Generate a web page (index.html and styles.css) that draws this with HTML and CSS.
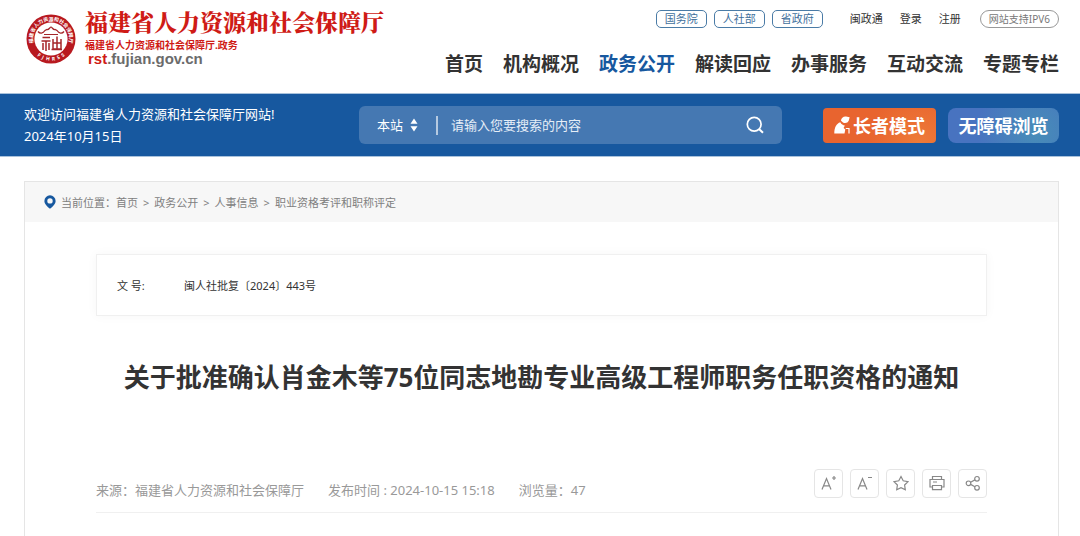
FILE: index.html
```html
<!DOCTYPE html>
<html lang="zh-CN">
<head>
    <meta charset="UTF-8">
    <meta name="viewport" content="width=device-width, initial-scale=1.0">
    <title>福建省人力资源和社会保障厅</title>
    <link rel="stylesheet" href="styles.css">
</head>
<body>
    <header class="header">
        <a class="logo" href="#">
            <svg class="seal" viewBox="0 0 50 50" aria-hidden="true">
                <defs>
                    <path id="arcTop" d="M7.3 29 A18.2 18.2 0 1 1 42.7 29"/>
                    <path id="arcBottom" d="M3.5 30 A22.2 22.2 0 0 0 46.5 30"/>
                </defs>
                <circle cx="25" cy="25" r="24.5" fill="#b8191f"/>
                <circle cx="25" cy="25" r="16.6" fill="#fff"/>
                <text class="seal-name"><textPath href="#arcTop" startOffset="50%" text-anchor="middle">福建省人力资源和社会保障厅</textPath></text>
                <text class="seal-code"><textPath href="#arcBottom" startOffset="50%" text-anchor="middle">F&#160; J&#160; H&#160; R&#160; S&#160; S</textPath></text>
                <g fill="none" stroke="#a5262a" stroke-width="1.5">
                    <path d="M12 17.5 C14 20 17 19.5 19 16.5 L21 15.5 C23 16 23.500 13.500 25 13 C26.500 13.500 27 16 29 15.500 L31 16.500 C33 19.500 36 20 38 17.500" stroke-width="1.300"/>
                    <path d="M18 20.500 H32" stroke-width="1"/>
                    <path d="M16.500 23.500 H24 M15.500 27 H24.500 M20 27 V37 M17 29 V36 M23 29 V36"/>
                    <path d="M27 25 V35 H35 V25 M27 29 H35 M31 22.500 V35 M25.500 35.500 H36"/>
                </g>
            </svg>
            <span class="logo-text">
                <span class="logo-name">福建省人力资源和社会保障厅</span>
                <span class="logo-sub">福建省人力资源和社会保障厅.政务</span>
                <span class="logo-url"><b>rst</b>.fujian.gov.cn</span>
            </span>
        </a>
        <div class="header-right">
            <div class="top-links">
                <a class="tag" href="#">国务院</a>
                <a class="tag" href="#">人社部</a>
                <a class="tag" href="#">省政府</a>
                <div class="user-links">
                    <a href="#">闽政通</a>
                    <a href="#">登录</a>
                    <a href="#">注册</a>
                </div>
                <a class="ipv6" href="#">网站支持IPV6</a>
            </div>
            <nav class="nav">
                <a href="#">首页</a>
                <a href="#">机构概况</a>
                <a href="#" class="active">政务公开</a>
                <a href="#">解读回应</a>
                <a href="#">办事服务</a>
                <a href="#">互动交流</a>
                <a href="#">专题专栏</a>
            </nav>
        </div>
    </header>

    <div class="banner">
        <div class="welcome">
            <p>欢迎访问福建省人力资源和社会保障厅网站!</p>
            <p>2024年10月15日</p>
        </div>
        <form class="search">
            <select aria-label="搜索范围">
                <option>本站</option>
            </select>
            <svg class="sort" viewBox="0 0 8 14" aria-hidden="true"><path d="M4 0.500 L7.500 5.800 H0.500 Z M4 13.500 L7.500 8.200 H0.500 Z" fill="#fff"/></svg>
            <span class="divider"></span>
            <input type="text" placeholder="请输入您要搜索的内容" aria-label="搜索内容">
            <button type="button" class="search-btn" aria-label="搜索">
                <svg viewBox="0 0 18 18"><circle cx="8.200" cy="8.200" r="6.900" fill="none" stroke="#fff" stroke-width="1.700"/><path d="M13 13 L17 16.800" stroke="#fff" stroke-width="2"/></svg>
            </button>
        </form>
        <div class="modes">
            <button type="button" class="mode elder">
                <svg viewBox="0 0 16 18" aria-hidden="true">
                    <path d="M7 4.800 C7 2 9.500 0.300 12 0.600 L15.600 1.200 L14.800 4.500 C14 7 11 7.600 9 6.500 Z" fill="#fff"/>
                    <path d="M0.300 17.500 C0.300 11.500 2.500 7.500 6.300 6.300 C7.500 8.500 9 9.300 10.800 9.400 L9.600 12 L11.300 13.500 L10.500 17.500 Z" fill="#fff"/>
                    <path d="M11.800 12.500 H15 V17.500" fill="none" stroke="#fff" stroke-width="1.200"/>
                </svg>
                <span>长者模式</span>
            </button>
            <button type="button" class="mode access">无障碍浏览</button>
        </div>
    </div>

    <main class="panel">
        <div class="crumbs">
            <svg viewBox="0 0 12 14" aria-hidden="true"><path fill-rule="evenodd" d="M6 0.300 A5.600 5.600 0 0 1 11.600 5.900 C11.600 9 8.500 11.500 6 13.800 C3.500 11.500 0.400 9 0.400 5.900 A5.600 5.600 0 0 1 6 0.300 Z M6 3.200 A2.700 2.700 0 1 0 6 8.600 A2.700 2.700 0 1 0 6 3.200 Z" fill="#17589f"/></svg>
            <span>当前位置：</span>
            <a href="#">首页</a><i>&gt;</i>
            <a href="#">政务公开</a><i>&gt;</i>
            <a href="#">人事信息</a><i>&gt;</i>
            <a href="#">职业资格考评和职称评定</a>
        </div>
        <article class="article">
            <dl class="doc-info">
                <dt>文 号:</dt>
                <dd>闽人社批复〔2024〕443号</dd>
            </dl>
            <h1>关于批准确认肖金木等75位同志地勘专业高级工程师职务任职资格的通知</h1>
            <div class="meta">
                <span>来源：福建省人力资源和社会保障厅</span>
                <span>发布时间 : 2024-10-15 15:18</span>
                <span>浏览量：47</span>
                <div class="tools">
                    <button type="button" aria-label="放大字体">
                        <svg viewBox="0 0 16 16"><path d="M1 14.500 L5.500 3.500 L10 14.500 M2.700 10.800 H8.300 M13 1 V5 M11 3 H15"/></svg>
                    </button>
                    <button type="button" aria-label="缩小字体">
                        <svg viewBox="0 0 16 16"><path d="M1 14.500 L5.500 3.500 L10 14.500 M2.700 10.800 H8.300 M11 2.500 H15"/></svg>
                    </button>
                    <button type="button" aria-label="收藏">
                        <svg viewBox="0 0 16 16"><path d="M8 1.500 L10.200 5.800 L15 6.600 L11.600 10 L12.300 14.700 L8 12.600 L3.700 14.700 L4.400 10 L1 6.600 L5.800 5.800 Z"/></svg>
                    </button>
                    <button type="button" aria-label="打印">
                        <svg viewBox="0 0 16 16"><path d="M3.500 4 V1.500 H12.500 V4 M3.500 12 H1 V4.500 H15 V12 H12.500 M3.500 10.500 H12.500 V14.700 H3.500 Z M4 7 H8"/></svg>
                    </button>
                    <button type="button" aria-label="分享">
                        <svg viewBox="0 0 16 16"><circle cx="3.500" cy="8.300" r="2.300"/><circle cx="12" cy="3.800" r="2.300"/><circle cx="12" cy="12.800" r="2.300"/><path d="M5.600 7.200 L9.900 4.900 M5.600 9.400 L9.900 11.700"/></svg>
                    </button>
                </div>
            </div>
        </article>
    </main>
</body>
</html>
```
FILE: styles.css
```css
* {
    box-sizing: border-box;
}
body {
    margin: 0;
    min-height: 100vh;
    display: flex;
    flex-direction: column;
    font-family: "Noto Sans", "Noto Sans CJK SC", sans-serif;
    font-size: 11px;
    color: #333;
    background-color: #fff;
}
a {
    color: inherit;
    text-decoration: none;
}
p, h1, dl, dd {
    margin: 0;
}
button, input, select {
    font-family: inherit;
    border: none;
    padding: 0;
    background: none;
}
button {
    cursor: pointer;
}

/* header */
.header {
    display: flex;
    justify-content: space-between;
    min-height: 93px;
    padding: 10px 21px 0 26px;
}
.logo {
    display: flex;
    gap: 9px;
    color: #cf1b16;
    white-space: nowrap;
}
.seal {
    width: 50px;
    height: 50px;
    margin-top: 4px;
}
.seal-name,
.seal-code {
    font-size: 5px;
    font-weight: bold;
    fill: #fff;
}
.logo-text {
    display: flex;
    flex-direction: column;
}
.logo-name {
    font-family: "Noto Serif CJK SC", "Noto Sans CJK SC", serif;
    font-size: 23px;
    font-weight: 900;
    line-height: 24px;
}
.logo-sub {
    margin-top: 4px;
    font-size: 10px;
    font-weight: bold;
    line-height: 14px;
}
.logo-url {
    padding-left: 3px;
    font-family: "Liberation Sans", Arial, sans-serif;
    font-size: 15px;
    font-weight: bold;
    line-height: 14px;
    color: #6b6b6b;
}
.logo-url b {
    color: #cf1b16;
}
.header-right {
    display: flex;
    flex-direction: column;
    align-items: flex-end;
    white-space: nowrap;
}
.top-links {
    display: flex;
    align-items: center;
    gap: 7px;
    line-height: 16px;
}
.tag {
    padding: 0 8px;
    border: 1px solid #4a7ba6;
    border-radius: 5px;
    color: #3f709c;
}
.user-links {
    display: flex;
    gap: 17px;
    margin: 0 12px 0 20px;
}
.ipv6 {
    padding: 0 8px;
    border: 1px solid #999;
    border-radius: 9px;
    font-size: 10px;
    color: #777;
}
.nav {
    display: flex;
    gap: 20px;
    margin-top: 22px;
    font-size: 19px;
    font-weight: bold;
    line-height: 28px;
}
.nav .active {
    color: #17589f;
}

/* blue bar */
.banner {
    display: flex;
    align-items: center;
    min-height: 64px;
    padding: 0 21px 0 24px;
    background-color: #17589f;
    border-top: 1px solid #a9c2dc;
    border-bottom: 1px solid #a9c2dc;
    color: #fff;
}
.welcome {
    flex: 0 0 335px;
    font-size: 13px;
    line-height: 22px;
}
.search {
    flex: 1;
    display: flex;
    align-items: center;
    height: 38px;
    padding: 0 18px;
    border-radius: 6px;
    background-color: #4578b2;
}
.search select {
    appearance: none;
    width: 28px;
    font-size: 13px;
    color: #fff;
}
.sort {
    width: 8px;
    height: 14px;
    margin-left: 5px;
}
.divider {
    width: 2px;
    height: 19px;
    margin: 0 13px 0 18px;
    background-color: #b5cae1;
}
.search input {
    flex: 1;
    min-width: 0;
    font-size: 13px;
    color: #fff;
    outline: none;
}
.search input::placeholder {
    color: #e6eef7;
}
.search-btn {
    display: flex;
}
.search-btn svg {
    width: 18px;
    height: 18px;
}
.modes {
    display: flex;
    gap: 12px;
    margin-left: 41px;
}
.mode {
    display: flex;
    align-items: center;
    justify-content: center;
    gap: 3px;
    height: 35px;
    color: #fff;
    font-size: 18px;
    font-weight: bold;
    white-space: nowrap;
}
.elder {
    width: 113px;
    border-radius: 4px;
    background: radial-gradient(circle at 85% 100%, #ee7b38, #e8642f 50%);
}
.elder svg {
    width: 16px;
    height: 18px;
}
.access {
    width: 111px;
    border-radius: 8px;
    background: radial-gradient(circle at 80% 70%, #478db8, #4873c0 65%);
}

/* content */
.panel {
    flex: 1;
    margin: 24px 21px 0 24px;
    border: 1px solid #e5e5e5;
    border-bottom: none;
}
.crumbs {
    display: flex;
    align-items: center;
    height: 40px;
    padding-left: 19px;
    background-color: #f7f7f7;
    color: #808080;
}
.crumbs svg {
    width: 12px;
    height: 14px;
    margin-right: 5px;
}
.crumbs i {
    margin: 0 5px;
    font-style: normal;
}
.article {
    padding: 32px 71px 0;
}
.doc-info {
    display: flex;
    align-items: center;
    height: 62px;
    padding-left: 20px;
    border: 1px solid #f0f0f0;
    box-shadow: 0 0 10px rgba(0, 0, 0, 0.04);
}
.doc-info dt {
    width: 67px;
}
h1 {
    margin-top: 42px;
    font-size: 26px;
    line-height: 38px;
    text-align: center;
}
.meta {
    display: flex;
    align-items: center;
    gap: 24px;
    margin-top: 66px;
    padding-bottom: 8px;
    border-bottom: 1px solid #f0f0f0;
    font-size: 13px;
    line-height: 28px;
    color: #999;
}
.meta span {
    padding-top: 14px;
}
.tools {
    display: flex;
    gap: 7px;
    margin-left: auto;
}
.tools button {
    display: flex;
    align-items: center;
    justify-content: center;
    width: 29px;
    height: 29px;
    border: 1px solid #e5e5e5;
    border-radius: 4px;
}
.tools svg {
    width: 16px;
    height: 16px;
    fill: none;
    stroke: #888;
    stroke-width: 1.2;
}
```
